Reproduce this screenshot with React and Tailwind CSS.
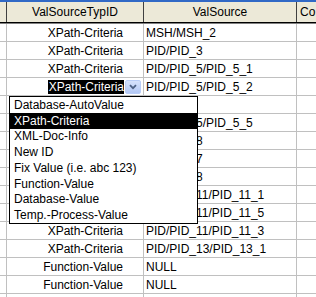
import React from "react";

const rows = [
  ["XPath-Criteria", "MSH/MSH_2"],
  ["XPath-Criteria", "PID/PID_3"],
  ["XPath-Criteria", "PID/PID_5/PID_5_1"],
  ["XPath-Criteria", "PID/PID_5/PID_5_2", true],
  ["", ""],
  ["", "PID/PID_5/PID_5_5"],
  ["", "PID/PID_8"],
  ["", "PID/PID_7"],
  ["", "PID/PID_8"],
  ["", "PID/PID_11/PID_11_1"],
  ["", "PID/PID_11/PID_11_5"],
  ["XPath-Criteria", "PID/PID_11/PID_11_3"],
  ["XPath-Criteria", "PID/PID_13/PID_13_1"],
  ["Function-Value", "NULL"],
  ["Function-Value", "NULL"],
  ["", ""],
];

const items = [
  "Database-AutoValue",
  "XPath-Criteria",
  "XML-Doc-Info",
  "New ID",
  "Fix Value (i.e. abc 123)",
  "Function-Value",
  "Database-Value",
  "Temp.-Process-Value",
];

export default function App() {
  return (
    <div className="relative w-[316px] h-[297px] overflow-hidden bg-white text-[12px] leading-none text-black font-['Liberation_Sans',Arial,sans-serif]">
      <div className="h-[2px] bg-[#3169c6]" />
      <div className="flex h-[21px] bg-[#ece9d8] border-b border-black">
        <div className="w-[7px] shrink-0 border-r border-[#404040]" />
        <div className="w-[137px] shrink-0 border-r border-[#404040] flex items-center justify-center">ValSourceTypID</div>
        <div className="w-[153px] shrink-0 border-r border-[#404040] flex items-center justify-center">ValSource</div>
        <div className="flex-1 flex items-center pl-[3px]">Co</div>
      </div>
      <div className="h-px bg-[#808080]" />
      {rows.map(([a, b, edit], i) => (
        <div key={i} className="flex h-[18px] border-b border-[#c0c0c0]">
          <div className="w-[7px] shrink-0 border-r border-[#c0c0c0]" />
          <div className="w-[137px] shrink-0 border-r border-[#c0c0c0] flex items-center justify-end pr-[2px]">
            {edit ? (
              <>
                <span className="bg-black text-white h-[14px] flex items-center pl-[1px]">{a}</span>
                <span className="ml-[1px] w-[16px] h-[14px] rounded-[2px] border border-[#b9cdf7] bg-gradient-to-b from-[#d6e2fc] to-[#b3c8f5] flex items-center justify-center">
                  <svg width="8" height="6" viewBox="0 0 8 6">
                    <path d="M1 1.2 L4 4.2 L7 1.2" fill="none" stroke="#4d6185" strokeWidth="1.8" />
                  </svg>
                </span>
              </>
            ) : (
              <span className="pr-[18px]">{a}</span>
            )}
          </div>
          <div className="w-[153px] shrink-0 border-r border-[#c0c0c0] flex items-center pl-[2px]">{b}</div>
          <div className="flex-1" />
        </div>
      ))}
      <div className="absolute left-[9px] top-[96px] w-[189px] border border-black bg-white">
        {items.map((t, i) => (
          <div
            key={i}
            className={`h-[15.75px] flex items-center pl-[4px] ${i === 1 ? "bg-black text-white" : ""}`}
          >
            {t}
          </div>
        ))}
      </div>
    </div>
  );
}
